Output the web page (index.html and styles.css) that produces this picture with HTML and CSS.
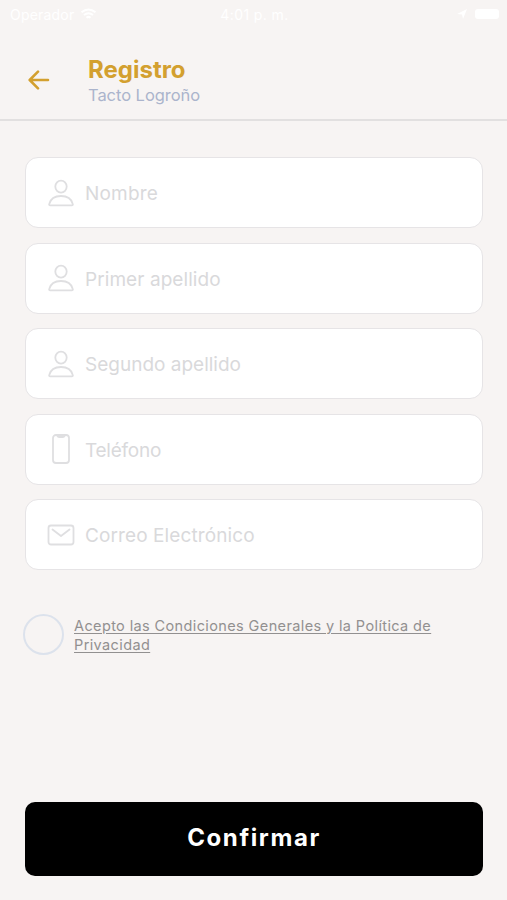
FILE: index.html
```html
<!DOCTYPE html>
<html lang="es">
<head>
<meta charset="utf-8">
<title>Registro</title>
<link rel="stylesheet" href="styles.css">
</head>
<body>
<svg class="defs" width="0" height="0" aria-hidden="true">
  <symbol id="person" viewBox="0 0 28 28">
    <ellipse cx="14" cy="7.600" rx="5.700" ry="6"/>
    <path d="M3.200 26.400h21.600c.9 0 1.200-.6 1-1.300C24.500 20.100 20 17 14 17S3.500 20.100 2.200 25.100c-.2.700.1 1.300 1 1.300z"/>
  </symbol>
</svg>
<div class="screen">
  <div class="status">
    <div class="carrier"><span>Operador</span>
      <svg width="17" height="12" viewBox="0 0 17 12"><path d="M1.500 4.200q7-5.500 14 0M4 7q4.500-3.500 9 0M6.500 9.700q2-1.600 4 0" fill="none" stroke="currentColor" stroke-width="2"/></svg>
    </div>
    <span class="time">4:01 p. m.</span>
    <div class="indicators">
      <svg width="10" height="10" viewBox="0 0 10 10"><path d="M0 5 10 0 6 10 5 5.500z" fill="currentColor"/></svg>
      <span class="battery"></span>
    </div>
  </div>
  <header class="header">
    <svg class="back" width="22" height="20" viewBox="0 0 22 20"><path d="M20 10H2M10 1.700 1.700 10l8.300 8.300"/></svg>
    <div class="titles">
      <h1>Registro</h1>
      <p>Tacto Logroño</p>
    </div>
  </header>
  <main class="form">
    <div class="field"><svg class="icon"><use href="#person"/></svg><span class="nombre">Nombre</span></div>
    <div class="field"><svg class="icon"><use href="#person"/></svg><span class="primer">Primer apellido</span></div>
    <div class="field"><svg class="icon"><use href="#person"/></svg><span>Segundo apellido</span></div>
    <div class="field"><svg class="icon phone" viewBox="0 0 28 30"><rect x="6" y="1" width="16" height="28" rx="3"/><path d="M10 1.500q.5 1.500 2 1.500h4q1.500 0 2-1.500"/></svg><span class="telefono">Teléfono</span></div>
    <div class="field"><svg class="icon" viewBox="0 0 28 28"><rect x="1.500" y="4.500" width="25" height="19" rx="2.500"/><path d="m5.500 8.500 8.500 6.500 8.500-6.500"/></svg><span class="correo">Correo Electrónico</span></div>
    <div class="terms">
      <span class="check"></span>
      <a>Acepto las Condiciones Generales y la Política de<br>Privacidad</a>
    </div>
  </main>
  <div class="confirm"><span>Confirmar</span></div>
</div>
</body>
</html>
```
FILE: styles.css
```css
* { box-sizing: border-box; }
body { margin: 0; background: #f7f4f3; font-family: Inter, "Liberation Sans", sans-serif; }
.defs { position: absolute; }
.screen { height: 900px; padding-bottom: 24px; display: flex; flex-direction: column; }
.status { height: 28px; padding: 0 8px 0 10px; display: grid; grid-template-columns: 1fr auto 1fr; align-items: center; color: #fff; font-size: 14px; }
.carrier { display: flex; align-items: center; gap: 6px; letter-spacing: 0.200px; }
.time { letter-spacing: 0.400px; }
.indicators { display: flex; justify-content: flex-end; align-items: center; gap: 8px; }
.battery { width: 24px; height: 10px; border-radius: 3px; background: #fff; }
.header { height: 93px; padding: 24px 0 0 28px; border-bottom: 2px solid #e2e0e0; display: flex; align-items: flex-start; gap: 38px; }
.back { margin-top: 18px; fill: none; stroke: #d3a02f; stroke-width: 2.600; stroke-linecap: round; stroke-linejoin: round; }
h1 { margin: 0; padding-top: 1px; font-size: 24px; line-height: 33px; font-weight: 700; color: #d3a02f; }
.titles p { margin: 0; font-size: 16.500px; line-height: 18px; letter-spacing: -0.050px; color: #abb4cc; }
.form { flex: 1; padding: 36px 24.500px 0 25px; display: flex; flex-direction: column; gap: 14.500px; }
.field { height: 71px; flex: none; padding-left: 21px; border: 1.500px solid #e6e4e6; border-radius: 13px; background: #fff; display: flex; align-items: center; gap: 10px; color: #d9d9db; font-size: 19px; white-space: nowrap; }
.field span { padding-top: 2px; }
.nombre { letter-spacing: 0.200px; }
.primer { letter-spacing: 0.070px; }
.telefono { letter-spacing: -0.250px; }
.correo { letter-spacing: 0.100px; }
.icon { width: 28px; height: 28px; fill: none; stroke: #dfdfe1; stroke-width: 1.800; stroke-linecap: round; stroke-linejoin: round; }
.phone { height: 30px; }
.terms { margin: 29px 0 0 -2px; display: flex; align-items: center; gap: 10px; }
.check { width: 41px; height: 41px; flex: none; border: 2px solid #dce2ec; border-radius: 50%; }
.terms a { padding-top: 2px; color: #929090; font-size: 14.500px; line-height: 19.500px; letter-spacing: 0.380px; text-decoration: underline; text-underline-offset: 2px; white-space: nowrap; }
.confirm { height: 74px; margin: 0 24px 0 25px; padding-bottom: 3px; border-radius: 10px; background: #000; color: #fff; display: flex; align-items: center; justify-content: center; font-size: 24px; font-weight: 700; letter-spacing: 1.600px; }
```
